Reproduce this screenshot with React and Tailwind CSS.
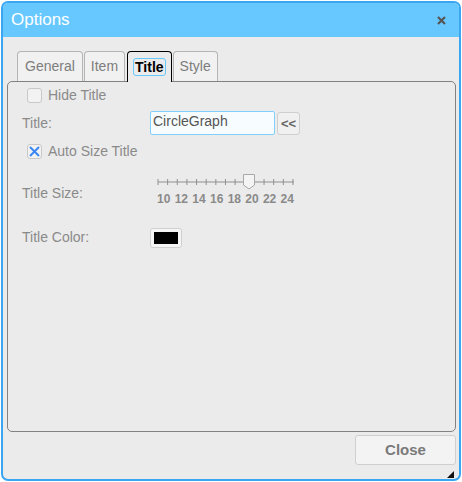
import { useState } from "react";

const tabs = ["General", "Item", "Title", "Style"];
const sizes = [10, 12, 14, 16, 18, 20, 22, 24];

function Check({ checked }) {
  return (
    <span className="w-[15px] h-[15px] rounded-[3px] border border-[#c8c8c8] bg-[#f2f2f2] flex items-center justify-center">
      {checked && (
        <svg width="13" height="13" viewBox="0 0 13 13">
          <path d="M2 2 L11 11 M11 2 L2 11" stroke="#3b87f5" strokeWidth="2" />
        </svg>
      )}
    </span>
  );
}

function Slider() {
  const ticks = Array.from({ length: 15 }, (_, i) => 1 + i * 9.64);
  return (
    <div className="flex flex-col">
      <svg width="140" height="18" viewBox="0 0 140 18">
        <line x1="1" y1="10" x2="137" y2="10" stroke="#bdbdbd" strokeWidth="2" />
        {ticks.map((x, i) => (
          <line key={i} x1={x} y1="7" x2={x} y2="13" stroke="#8f8f8f" strokeWidth="1" />
        ))}
        <path d="M86.5 2.5 H97.5 V13 L92 17 L86.5 13 Z" fill="#f4f4f4" stroke="#a8a8a8" strokeWidth="1" />
      </svg>
      <div className="flex justify-between w-[137px] text-[12px] font-bold text-[#8a8a8a] leading-none mt-[3px]">
        {sizes.map((s) => (
          <span key={s}>{s}</span>
        ))}
      </div>
    </div>
  );
}

export default function App() {
  const [tab] = useState("Title");
  return (
    <div className="w-[462px] h-[482px] bg-white p-px" style={{ fontFamily: '"Liberation Sans", Arial, sans-serif' }}>
      <div className="w-[460px] h-[480px] border-2 border-[#3aa6f2] rounded-[7px] bg-[#ebebeb] flex flex-col overflow-hidden">
        <div className="h-[34px] bg-[#66c8ff] flex items-center justify-between pl-[8px] pr-[13px]">
          <span className="text-white text-[17px]">Options</span>
          <svg width="9" height="9" viewBox="0 0 9 9">
            <path d="M1 1 L8 8 M8 1 L1 8" stroke="#555" strokeWidth="2.2" />
          </svg>
        </div>
        <div className="flex-1 flex flex-col pl-[4px] pr-[3px] pt-[14px]">
          <div className="flex pl-[10px] h-[30px] items-end">
            {tabs.map((t) =>
              t === tab ? (
                <div key={t} className="h-[31px] mb-[-1px] px-[5px] border border-black border-b-0 rounded-t-[4px] bg-[#ebebeb] flex items-center relative z-10 mx-px">
                  <span className="text-[14px] font-bold text-black border border-[#66c8ff] rounded-[3px] px-[1px] leading-[16px]">{t}</span>
                </div>
              ) : (
                <div key={t} className={`h-[30px] ${t === "General" ? "px-[7px]" : "px-[6px]"} border border-[#b5b5b5] border-b-0 rounded-t-[4px] bg-[#f1f1f1] flex items-center mr-px text-[14px] text-[#7d7d7d]`}>
                  {t}
                </div>
              )
            )}
          </div>
          <div className="h-[351px] border border-[#828282] rounded-[5px] bg-[#ebebeb] text-[14px] text-[#8a8a8a] pl-[14px] pt-[5px]">
            <div className="flex items-center h-[16px] pl-[5px] gap-[6px]">
              <Check />
              <span>Hide Title</span>
            </div>
            <div className="flex items-center mt-[8px] h-[24px]">
              <span className="w-[128px]">Title:</span>
              <div className="w-[125px] h-[24px] border border-[#80d0ff] rounded-[2px] bg-[#f7fcff] text-[#555] text-[14px] px-[2px] leading-[18px]">CircleGraph</div>
              <button className="ml-[2px] w-[23px] h-[23px] border border-[#cfcfcf] rounded-[3px] bg-[#f0f0f0] text-[#666] font-bold text-[13px] leading-none">&lt;&lt;</button>
            </div>
            <div className="flex items-center h-[16px] mt-[8px] pl-[5px] gap-[6px]">
              <Check checked />
              <span>Auto Size Title</span>
            </div>
            <div className="flex items-start mt-[13px]">
              <span className="w-[135px] mt-[11px]">Title Size:</span>
              <Slider />
            </div>
            <div className="flex items-center mt-[22px]">
              <span className="w-[128px]">Title Color:</span>
              <span className="w-[32px] h-[20px] border border-[#cfcfcf] rounded-[3px] bg-[#f5f5f5] p-[3px]">
                <span className="block w-full h-full bg-black" />
              </span>
            </div>
          </div>
          <div className="flex justify-end pt-[3px]">
            <button className="w-[101px] h-[30px] border border-[#cfcfcf] rounded-[3px] bg-[#f3f3f3] text-[#7a7a7a] font-bold text-[15px]">Close</button>
          </div>
          <div className="flex justify-end pr-[2px] mt-[6px]">
            <svg width="7" height="7" viewBox="0 0 7 7">
              <path d="M7 0 L7 7 L0 7 Z" fill="#111" />
            </svg>
          </div>
        </div>
      </div>
    </div>
  );
}
